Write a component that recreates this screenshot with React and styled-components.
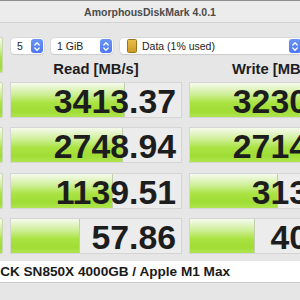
import React from "react";
import styled, { createGlobalStyle } from "styled-components";

const GlobalStyle = createGlobalStyle`
  html, body {
    margin: 0;
    padding: 0;
    width: 300px;
    height: 300px;
    overflow: hidden;
    background: #e6e6e6;
    font-family: "Liberation Sans", Arial, sans-serif;
  }
`;

const results = [
  { name: "SEQ1M QD8", read: "3413.37", write: "3230.62" },
  { name: "SEQ1M QD1", read: "2748.94", write: "2714.09" },
  { name: "RND4K QD64", read: "1139.51", write: "313.47" },
  { name: "RND4K QD1", read: "57.86", write: "40.21" },
];

// log scale, px inside a 172px cell
const barWidth = (v) => Math.max(0, 23.3 + 25.4 * Math.log10(parseFloat(v)));

const green = `linear-gradient(
  to bottom,
  #f6fbee 0%,
  #e8f6d0 12%,
  #cdef94 34%,
  #aae343 58%,
  #9fdd35 82%,
  #aee44f 100%
)`;

const Window = styled.div`
  width: 486px;
  margin-left: -93px;
  display: flex;
  flex-direction: column;
`;

const TitleBar = styled.div`
  height: 21px;
  border-top: 1px solid #8e8e8e;
  border-bottom: 1px solid #d2d2d2;
  background: #ececec;
  display: flex;
  align-items: center;
  justify-content: center;
  font-weight: bold;
  font-size: 10.5px;
  color: #4b4b4b;
`;

const Body = styled.div`
  padding: 14px 32px 0 10px;
  display: flex;
  flex-direction: column;
`;

const TopGrid = styled.div`
  display: grid;
  grid-template-columns: 86px 172px 172px;
  grid-template-rows: 17px 24px;
  column-gap: 7px;
`;

const GreenButton = styled.div`
  height: 36px;
  box-sizing: border-box;
  border: 1px solid #c9d8b2;
  border-radius: 2px;
  background: ${green};
  display: flex;
  align-items: center;
  justify-content: center;
  font-weight: bold;
  font-size: 10px;
  color: #1c1c1c;
`;

const AllButton = styled(GreenButton)`
  grid-row: 1 / 3;
  grid-column: 1;
  align-self: start;
  font-size: 13px;
`;

const Controls = styled.div`
  grid-row: 1;
  grid-column: 2 / 4;
  display: flex;
  gap: 7px;
  padding-left: 1px;
  align-items: flex-end;
`;

const Select = styled.div`
  width: ${(p) => p.$w}px;
  height: 16px;
  box-sizing: border-box;
  background: #ffffff;
  border-radius: 4px;
  box-shadow: 0 0 0 0.5px #cfcfcf, 0 0.5px 1px rgba(0, 0, 0, 0.12);
  display: flex;
  align-items: center;
  padding: 0 1px 0 ${(p) => p.$pad}px;
  gap: 3px;
  font-size: 10.5px;
  color: #222;
`;

const SelectLabel = styled.span`
  flex: 1;
  white-space: nowrap;
`;

const Stepper = styled.span`
  width: 12px;
  height: 14px;
  border-radius: 3px;
  background: linear-gradient(to bottom, #6a93f8, #4d78f2);
  display: flex;
  align-items: center;
  justify-content: center;
`;

const DriveIcon = styled.span`
  width: 8px;
  height: 12px;
  border-radius: 1.5px;
  border: 1px solid #9a7418;
  background: linear-gradient(to bottom, #e8bd48, #cf9c25);
  margin-right: 2px;
`;

const Header = styled.div`
  grid-row: 2;
  grid-column: ${(p) => p.$col};
  align-self: end;
  text-align: center;
  font-weight: bold;
  font-size: 14.8px;
  line-height: 17px;
  color: #1e1e1e;
`;

const TestGrid = styled.div`
  margin-top: 4px;
  display: grid;
  grid-template-columns: 86px 172px 172px;
  grid-auto-rows: 36px;
  column-gap: 7px;
  row-gap: 9.3px;
`;

const Cell = styled.div`
  position: relative;
  box-sizing: border-box;
  border: 1px solid #d5d5d5;
  background: #ececec;
  display: flex;
  align-items: center;
  justify-content: flex-end;
  padding: 4px 5px 0 0;
  overflow: hidden;
`;

const Fill = styled.div`
  position: absolute;
  left: 0;
  top: 0;
  bottom: 0;
  background: ${green};
  border-right: 1px solid #c2cfae;
`;

const Value = styled.span`
  position: relative;
  font-weight: bold;
  font-size: 33.8px;
  line-height: 1;
  color: #1d1d1d;
  white-space: nowrap;
`;

const Comment = styled.div`
  margin: 7px 32px 0 10px;
  height: 21px;
  background: #ffffff;
  border-bottom: 1px solid #cdcdcd;
  display: flex;
  align-items: center;
  padding-left: 25px;
  font-weight: bold;
  font-size: 13.6px;
  color: #1a1a1a;
  white-space: nowrap;
`;

const Chevrons = () => (
  <svg width="8" height="11" viewBox="0 0 8 11">
    <path
      d="M1.8 4 L4 1.8 L6.2 4 M1.8 7 L4 9.2 L6.2 7"
      fill="none"
      stroke="#fff"
      strokeWidth="1.3"
      strokeLinecap="round"
      strokeLinejoin="round"
    />
  </svg>
);

const Result = ({ value }) => (
  <Cell>
    <Fill style={{ width: `${barWidth(value)}px` }} />
    <Value>{value}</Value>
  </Cell>
);

export default function App() {
  return (
    <>
      <GlobalStyle />
      <Window>
        <TitleBar>AmorphousDiskMark 4.0.1</TitleBar>
        <Body>
          <TopGrid>
            <AllButton>All</AllButton>
            <Controls>
              <Select $w={33} $pad={6}>
                <SelectLabel>5</SelectLabel>
                <Stepper>
                  <Chevrons />
                </Stepper>
              </Select>
              <Select $w={62} $pad={6}>
                <SelectLabel>1 GiB</SelectLabel>
                <Stepper>
                  <Chevrons />
                </Stepper>
              </Select>
              <Select $w={182} $pad={7}>
                <DriveIcon />
                <SelectLabel>Data (1% used)</SelectLabel>
                <Stepper>
                  <Chevrons />
                </Stepper>
              </Select>
            </Controls>
            <Header $col={2}>Read [MB/s]</Header>
            <Header $col={3}>Write [MB/s]</Header>
          </TopGrid>
          <TestGrid>
            {results.map((r) => (
              <React.Fragment key={r.name}>
                <GreenButton>{r.name}</GreenButton>
                <Result value={r.read} />
                <Result value={r.write} />
              </React.Fragment>
            ))}
          </TestGrid>
        </Body>
        <Comment>WD_BLACK SN850X 4000GB / Apple M1 Max</Comment>
      </Window>
    </>
  );
}
